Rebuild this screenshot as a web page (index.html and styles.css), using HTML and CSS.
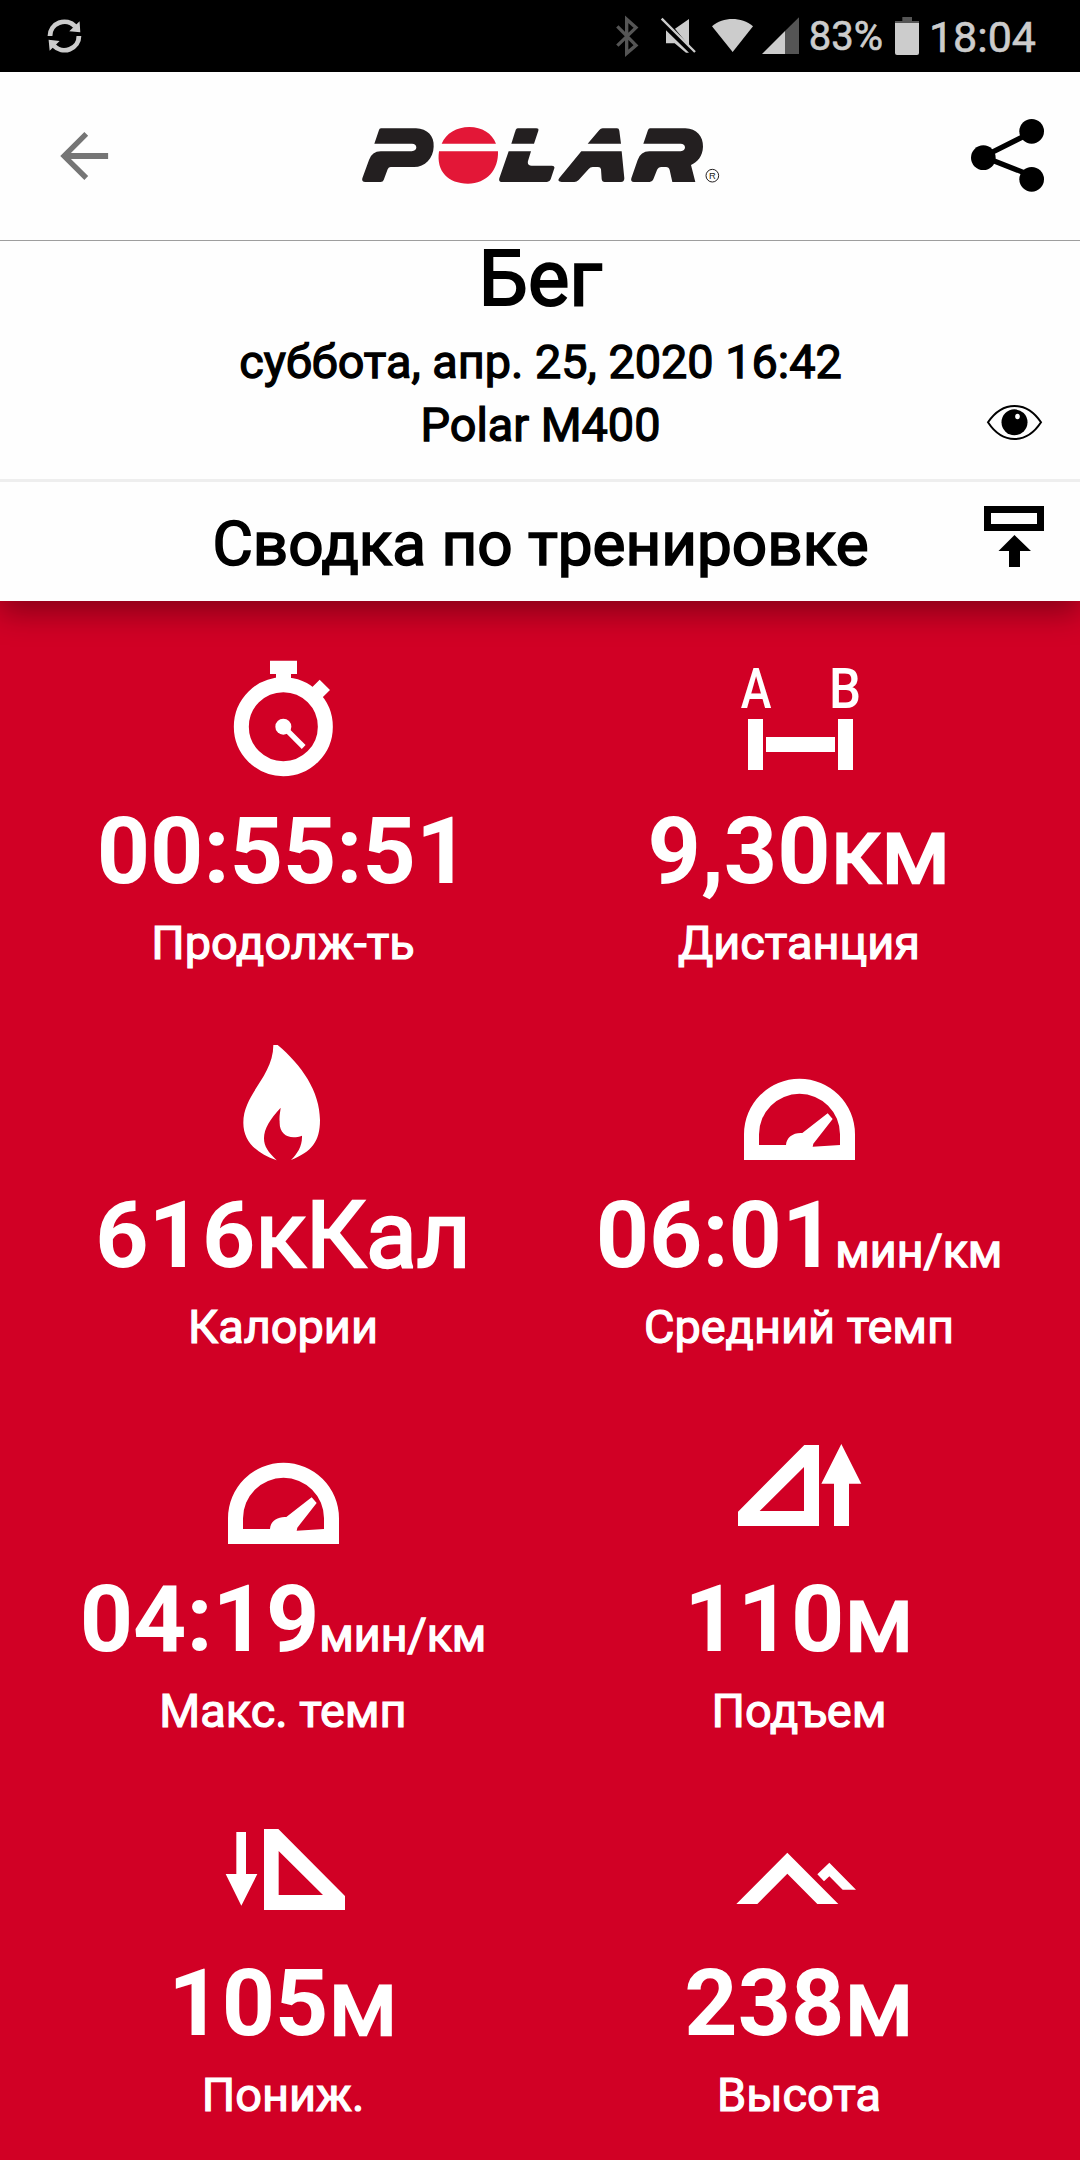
FILE: index.html
```html
<!DOCTYPE html>
<html lang="ru">
<head>
<meta charset="utf-8">
<title>Polar Flow</title>
<link rel="stylesheet" href="styles.css">
</head>
<body>
<div class="status">
  <svg width="48" height="72" viewBox="117 0 139.400 216" preserveAspectRatio="none"><g fill="none" stroke="#ccc" stroke-width="14"><path d="M146 108A42 42 0 0 1 219 79"/><path d="M230 108A42 42 0 0 1 157 137"/></g><path fill="#ccc" d="M232 64L234 97L202 94ZM145 152L142 119L174 123Z"/></svg>
  <div class="status-right">
    <svg width="36" height="72" viewBox="96 0 108 216"><path fill="none" stroke="#555" stroke-width="10" d="M112 79L168 136L140 160V58L168 83L112 137"/></svg>
    <svg width="54" height="72" viewBox="204 0 162 216"><path fill="#ccc" d="M285 86L327 57V137ZM258 91L327 158H318L284 130H258Z"/><path stroke="#ccc" stroke-width="7" d="M245 56L345 156"/></svg>
    <svg width="54" height="72" viewBox="366 0 162 216"><path fill="#ccc" d="M396 79C430 50 484 50 519 79L458 156Z"/></svg>
    <svg width="48" height="72" viewBox="528 0 144 216"><path fill="#ccc" d="M546 162L615 93V162Z"/><path fill="#555" d="M615 93L657 52V162H615Z"/></svg>
    <span class="battery-text">83%</span>
    <svg width="36" height="72" viewBox="924 0 108 216"><path fill="#ccc" d="M945 69H1017V159Q1017 165 1011 165H951Q945 165 945 159Z"/><path fill="#555" d="M967 51H996V63H1017V69H945V63H967Z"/></svg>
    <span class="clock">18:04</span>
  </div>
</div>

<header class="top">
  <div class="appbar">
    <svg width="120" height="168" viewBox="0 216 348.500 504" preserveAspectRatio="none"><path fill="#757575" d="M245 396L256 407L206 459H314V477H206L256 528L245 540L175 468Z"/></svg>
    <svg class="logo" width="400" height="90" viewBox="0 0 1200 270">
      <g fill="#231f20">
        <path d="M123 55H228C262 56 283 78 281 110C280 145 255 171 222 171H152Q146 171 143 178L131 210Q129 216 122 216H76Q64 216 67 205L87 150Q96 124 122 124H215Q229 122 229 112Q228 101 216 101H103L117 60Q118 55 123 55Z"/>
        <path d="M533 55H589Q597 55 595 62L582 101H514L527 60Q529 55 533 55Z"/>
        <path d="M506 124H573L564 153Q561 167 575 167H636Q645 167 643 175L632 208Q629 216 621 216H487Q475 216 478 205Z"/>
        <path d="M788 55H831Q837 55 838 62L843 101H743L778 60Q782 55 788 55Z"/>
        <path d="M724 124H845L853 205Q853 216 843 216H794Q786 216 785 207L783 178Q782 171 774 171H758Q751 171 746 177L716 210Q710 216 703 216H665Q650 214 658 204Z"/>
        <path d="M930 55H1036C1070 56 1090 80 1089 110C1088 140 1072 155 1053 165L1066 216H997L989 180Q987 171 978 171H964Q955 171 951 180L940 208Q937 216 929 216H882Q871 216 874 205L893 150Q902 124 928 124H1022Q1035 122 1035 112Q1034 101 1022 101H910L924 60Q926 55 930 55Z"/>
      </g>
      <path fill="#e31737" d="M305 101C318 70 350 51 388 51C426 51 456 70 468 101ZM297 124H474C476 180 440 221 384 221C325 221 288 185 297 124Z"/>
      <circle cx="1117" cy="197" r="19" fill="none" stroke="#231f20" stroke-width="3"/>
      <text class="mark" x="1117" y="207" text-anchor="middle">R</text>
    </svg>
    <svg width="120" height="168" viewBox="1140 216 360 504"><path fill="none" stroke="#000" stroke-width="16" d="M1355 397L1210 470L1355 527"/><circle cx="1355" cy="394" r="37"/><circle cx="1210" cy="473" r="37"/><circle cx="1355" cy="538" r="37"/></svg>
  </div>
  <div class="session">
    <div class="session-text">
      <h1>Бег</h1>
      <p>суббота, апр. 25, 2020 16:42</p>
      <p>Polar M400</p>
    </div>
    <svg class="eye" width="96" height="62" viewBox="984 391 96 62"><path fill="none" stroke="#000" stroke-width="2" d="M988 422.300C995 412 1004 406 1014.500 406S1034 412 1041 422.300C1034 433 1025 439 1014.500 439S995 433 988 422.300Z"/><circle cx="1014.500" cy="422.300" r="13"/><ellipse cx="1017.500" cy="416.500" rx="2.300" ry="2.800" fill="#fff"/></svg>
  </div>
  <div class="summary-bar">
    <h2>Сводка по тренировке</h2>
    <svg width="96" height="119" viewBox="984 482 96 119"><path fill-rule="evenodd" d="M984 506H1044V531H984ZM991 513V524H1037V513Z"/><path d="M1014.500 535L1031 551H1020V567H1009V551H998.500Z"/></svg>
  </div>
</header>

<main class="stats">
  <section class="stat">
    <svg class="icon" viewBox="471 60 396 360"><circle cx="670" cy="260" r="126" fill="none" stroke="#fff" stroke-width="45"/><path d="M630 62H711V102H693V120H648V102H630ZM779 119L810 150L779 181L748 150Z"/><circle cx="670" cy="260" r="24"/><path stroke="#fff" stroke-width="16" d="M670 260L731 321"/></svg>
    <div class="value">00:55:51</div>
    <div class="label">Продолж-ть</div>
  </section>
  <section class="stat">
    <svg class="icon" viewBox="399 60 396 360"><text class="ab" x="422" y="203" textLength="92" lengthAdjust="spacingAndGlyphs">A</text><text class="ab" x="687" y="203" textLength="96" lengthAdjust="spacingAndGlyphs">B</text><path d="M444 237H489V390H444ZM498 291H705V336H498ZM714 237H759V390H714Z"/></svg>
    <div class="value">9,30<span class="big-unit">км</span></div>
    <div class="label">Дистанция</div>
  </section>
  <section class="stat">
    <svg class="icon" viewBox="471 42 396 360"><path d="M640 45L653 45C725 105 780 185 780 270C780 335 755 365 693 390C712 370 727 350 726 317C690 330 657 316 659 275C657 260 661 245 662 233C630 268 612 295 612 325C612 350 625 367 650 391C590 370 550 335 550 278C550 190 640 140 640 45Z"/></svg>
    <div class="value">616<span class="big-unit">кКал</span></div>
    <div class="label">Калории</div>
  </section>
  <section class="stat">
    <svg class="icon" viewBox="459 -18 396 360"><path fill-rule="evenodd" d="M492 330V253A166.500 166.500 0 0 1 825 253V330ZM537 285H618C619 262 640 247 667 249L743 190L758 207L700 281L698 290L780 285V253A121.500 121.500 0 0 0 537 253Z"/></svg>
    <div class="value">06:01<span class="unit">мин/км</span></div>
    <div class="label">Средний темп</div>
  </section>
  <section class="stat">
    <svg class="icon" viewBox="459 -18 396 360"><path fill-rule="evenodd" d="M492 330V253A166.500 166.500 0 0 1 825 253V330ZM537 285H618C619 262 640 247 667 249L743 190L758 207L700 281L698 290L780 285V253A121.500 121.500 0 0 0 537 253Z"/></svg>
    <div class="value">04:19<span class="unit">мин/км</span></div>
    <div class="label">Макс. темп</div>
  </section>
  <section class="stat">
    <svg class="icon" viewBox="279 24 396 360"><path fill-rule="evenodd" d="M493 75H537V318H294V275ZM492 141V273H359Z"/><path d="M604 72L664 191H627V318H582V191H544Z"/></svg>
    <div class="value">110<span class="big-unit">м</span></div>
    <div class="label">Подъем</div>
  </section>
  <section class="stat">
    <svg class="icon" viewBox="231 36 396 360"><path fill-rule="evenodd" d="M372 87H415L615 288V330H372ZM416 153V285H549Z"/><path d="M289 96H318V222H352L304 317L257 222H289Z"/></svg>
    <div class="value">105<span class="big-unit">м</span></div>
    <div class="label">Пониж.</div>
  </section>
  <section class="stat">
    <svg class="icon" viewBox="219 36 396 360"><path d="M382 158L535 312H472L382 221L292 312H229ZM508 188L588 269H548L508 229L492 244L472 223Z"/></svg>
    <div class="value">238<span class="big-unit">м</span></div>
    <div class="label">Высота</div>
  </section>
</main>
</body>
</html>
```
FILE: styles.css
```css
* { box-sizing: border-box; margin: 0; padding: 0; }
body {
  width: 1080px;
  height: 2160px;
  overflow: hidden;
  display: flex;
  flex-direction: column;
  background: #d10025;
  font-family: Roboto, "Liberation Sans", sans-serif;
  color: #000;
}
svg { display: block; flex: none; overflow: visible; }

.status {
  height: 72px;
  flex: none;
  display: flex;
  justify-content: space-between;
  align-items: center;
  padding: 0 37px 0 40px;
  background: #000;
  color: #ccc;
}
.status-right { display: flex; align-items: center; -webkit-text-stroke: 0.6px; }
.battery-text { width: 84px; padding-top: 2px; text-align: center; font-size: 40px; line-height: 72px; }
.clock { width: 117px; margin-right: 2px; padding-top: 2px; text-align: center; font-size: 43px; line-height: 72px; }

.top {
  flex: none;
  background: #fefefe;
  box-shadow: 0 12px 28px rgba(0, 0, 0, 0.34);
}
.appbar {
  height: 169px;
  display: flex;
  justify-content: space-between;
  border-bottom: 1px solid #9e9e9e;
}
.logo { margin-top: 38px; }
.mark { font: 28px "Liberation Sans", sans-serif; fill: #231f20; }

.session {
  height: 241px;
  display: grid;
  grid-template-columns: 96px 1fr 96px;
  border-bottom: 3px solid #eee;
}
.session-text { grid-column: 2; text-align: center; padding-left: 1px; }
h1 { font-size: 78px; line-height: 76px; font-weight: 400; margin-bottom: 14px; -webkit-text-stroke: 2px; }
p { font-size: 46.8px; line-height: 62px; -webkit-text-stroke: 1.3px; }
p + p { padding-top: 1px; }
.eye { margin-top: 150px; }

.summary-bar {
  height: 119px;
  display: grid;
  grid-template-columns: 96px 1fr 96px;
}
h2 {
  grid-column: 2;
  padding: 2px 0 0 1px;
  text-align: center;
  font-size: 62px;
  line-height: 119px;
  font-weight: 400;
  -webkit-text-stroke: 1.7px;
}

.stats {
  display: grid;
  grid-template-columns: 516px 516px;
  grid-auto-rows: 384px;
  padding: 27px 23px 0 25px;
  color: #fff;
}
.stat {
  display: flex;
  flex-direction: column;
  align-items: center;
  padding-top: 32px;
  white-space: nowrap;
}
.icon { width: 132px; height: 120px; fill: #fff; }
.ab { font: 500 168px Roboto, sans-serif; }
.value { margin-top: 17px; font-size: 93px; line-height: 110px; font-weight: 700; }
.big-unit { font-size: 93.5px; font-weight: 400; line-height: 1; -webkit-text-stroke: 2.6px; }
.unit { font-size: 46.5px; font-weight: 400; line-height: 1; -webkit-text-stroke: 1.4px; }
.label { margin-top: 6px; font-size: 46.9px; line-height: 60px; -webkit-text-stroke: 1.2px; }
```
